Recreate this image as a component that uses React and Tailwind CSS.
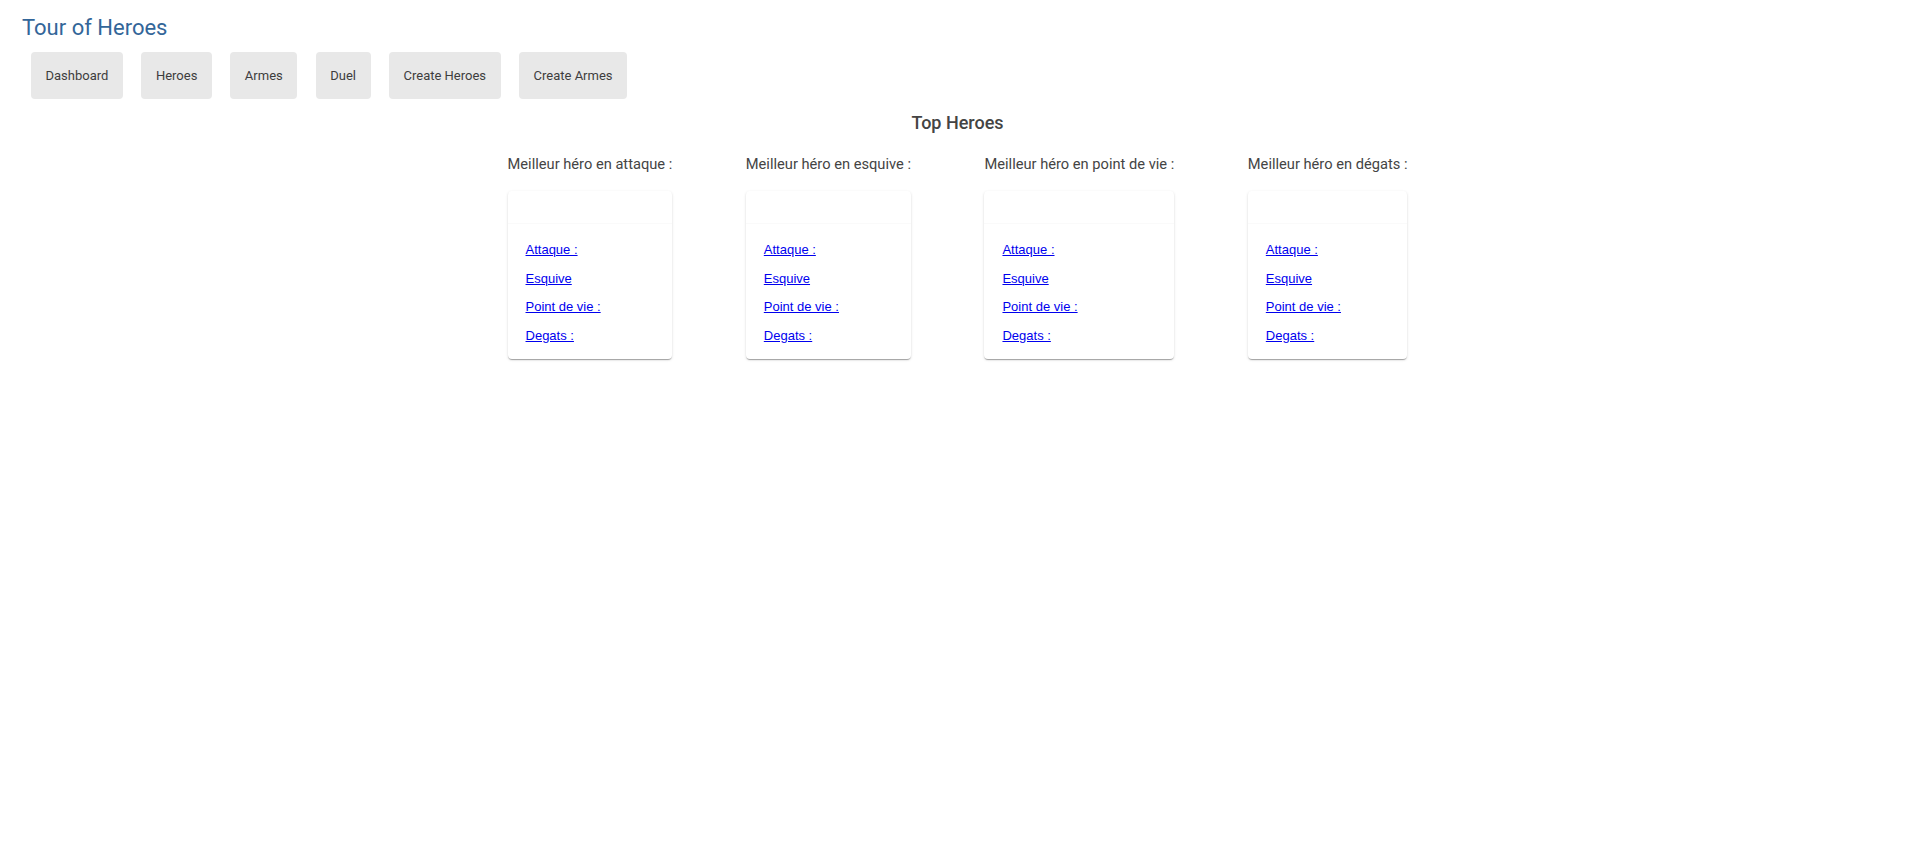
import React from 'react';

const navItems = ['Dashboard', 'Heroes', 'Armes', 'Duel', 'Create Heroes', 'Create Armes'];

const bestOf = [
    'Meilleur héro en attaque :',
    'Meilleur héro en esquive :',
    'Meilleur héro en point de vie :',
    'Meilleur héro en dégats :',
];

const stats = ['Attaque :', 'Esquive', 'Point de vie :', 'Degats :'];

function HeroCard() {
    return (
        <div className="bg-white rounded-[4px] shadow-[0_2px_1px_-1px_rgba(0,0,0,0.2),0_1px_1px_0_rgba(0,0,0,0.14),0_1px_3px_0_rgba(0,0,0,0.12)]">
            {/* header vide */}
            <div className="h-[32px]"></div>
            <div className="border-t border-[#fafafa] pt-[18px] pb-4 pl-[18px] flex flex-col gap-[13.5px]">
                {stats.map(s => (
                    <a key={s} href="#" className="text-[13px] leading-[15px] text-[#0000ee] underline font-['Liberation_Sans',Arial,sans-serif] self-start">
                        {s}
                    </a>
                ))}
            </div>
        </div>
    );
}

export default function App() {
    return (
        <div className="min-h-screen bg-white font-['Roboto',sans-serif]">
            <h1 className="pt-[15px] pl-[22px] text-[22px] leading-[26px] font-normal text-[#369]">Tour of Heroes</h1>

            <nav className="flex gap-[18.5px] pl-[31px] mt-[11px]">
                {navItems.map(item => (
                    <a key={item} href="#" className="h-[47px] px-[14.5px] flex items-center bg-[#e8e8e8] text-[#3d3d3d] text-[13px] rounded-[4px]">
                        {item}
                    </a>
                ))}
            </nav>

            <h2 className="mt-[13px] text-center text-[18px] leading-[21px] font-medium text-[#444]">Top Heroes</h2>

            <div className="flex justify-center gap-[73.5px] mt-[22px]">
                {bestOf.map(label => (
                    <div key={label} className="flex flex-col">
                        <div className="text-[14.67px] leading-[18px] text-[#444] whitespace-nowrap">{label}</div>
                        <div className="mt-[18px]">
                            <HeroCard />
                        </div>
                    </div>
                ))}
            </div>
        </div>
    );
}
